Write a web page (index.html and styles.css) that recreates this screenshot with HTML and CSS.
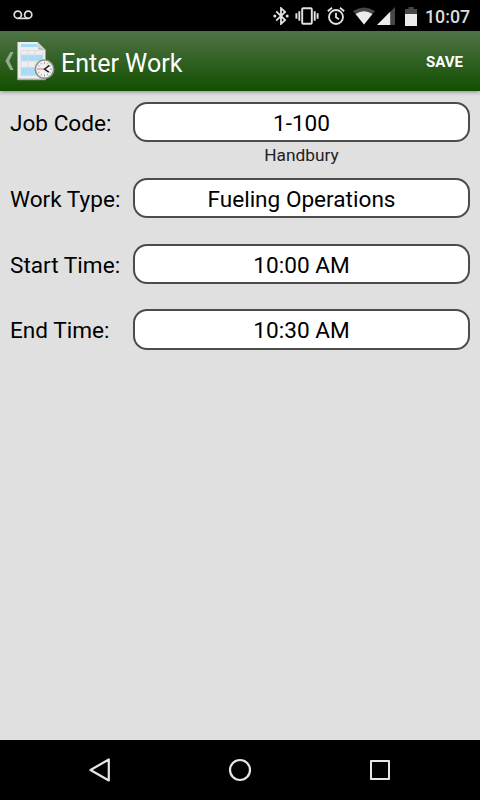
FILE: index.html
```html
<!DOCTYPE html>
<html lang="en">
<head>
    <meta charset="UTF-8">
    <meta name="viewport" content="width=device-width, initial-scale=1.0">
    <title>Enter Work</title>
    <link rel="stylesheet" href="styles.css">
</head>
<body>
    <div class="status-bar">
        <svg class="voicemail" width="20" height="10" viewBox="0 0 20 10" fill="none" stroke="#e0e0e0" stroke-width="1.7">
            <circle cx="4.8" cy="4.7" r="3.6"/>
            <circle cx="15.2" cy="4.7" r="3.6"/>
            <path d="M4.8 8.4h10.4"/>
        </svg>
        <!-- Bluetooth -->
        <svg width="16" height="18" viewBox="0 0 16 18">
            <path d="M3.2 4.4l8.9 8.6L8 16.8V1.2l4.1 3.8-8.9 8.6" fill="none" stroke="#e4e4e4" stroke-width="1.8"/>
            <circle cx="1.8" cy="9" r="1.5" fill="#e4e4e4"/>
            <circle cx="14.2" cy="9" r="1.5" fill="#e4e4e4"/>
        </svg>
        <!-- Vibrate -->
        <svg class="vibrate" width="24" height="18" viewBox="0 0 24 18" fill="none" stroke="#e4e4e4" stroke-width="1.9">
            <rect x="7.2" y="1.2" width="9.6" height="15.6" rx="1"/>
            <path d="M4.3 4.3v9.4M1.4 6.3v5.4M19.7 4.3v9.4M22.6 6.3v5.4"/>
        </svg>
        <!-- Alarm -->
        <svg class="alarm" width="18" height="18" viewBox="0 0 18 18" fill="none" stroke="#e4e4e4" stroke-width="1.8">
            <circle cx="9" cy="10" r="7"/>
            <path d="M.8 4.2L5 .8M13 .8l4.2 3.4M9 5.8v4.5l3 2"/>
        </svg>
        <!-- Wifi -->
        <svg class="wifi" width="22" height="18" viewBox="0 0 22 18">
            <path d="M0 4Q11-3.2 22 4L11 17.6Z" fill="#474747"/>
            <path d="M2.6 7.1Q11 1.6 19.4 7.1L11 17.6Z" fill="#ececec"/>
        </svg>
        <!-- Signal -->
        <svg class="signal" width="18" height="18" viewBox="0 0 18 18">
            <path d="M0 18L18 0v18Z" fill="#474747"/>
            <path d="M0 18L13.2 4.8V18Z" fill="#ececec"/>
        </svg>
        <!-- Battery -->
        <svg class="battery" width="12" height="19" viewBox="0 0 12 19">
            <path d="M0 2h3.5V0h5v2H12v5H0Z" fill="#474747"/>
            <path d="M0 7h12v12H0Z" fill="#ececec"/>
        </svg>
        <span class="clock">10:07</span>
    </div>

    <div class="action-bar">
        <svg class="up" width="9" height="20" viewBox="0 0 9 20">
            <path d="M5.4 1h3.2L4.2 10l4.4 9H5.4L.4 10Z" fill="#96ab8e"/>
        </svg>
        <svg class="logo" width="38" height="40" viewBox="0 0 38 40">
            <path d="M.5 1h20l8 8v30H.5Z" fill="#eeeeee"/>
            <path d="M.5 37.6h28v1.6H.5Z" fill="#a9a9a9"/>
            <path d="M4 3h15l3 3H4ZM4 14h22v6H4ZM4 26.5h15v8H4Z" fill="#a6dcf5"/>
            <path d="M4 9.5h22v25H4Z" fill="none" stroke="#d4dbdf" stroke-width=".8"/>
            <path d="M4 14h22M4 20h22M4 26.5h22M11 9.5v25M18 9.5v25" stroke="#d4dbdf" stroke-width=".8"/>
            <path d="M20.5 1l1 7.5 7 .5Z" fill="#b2b6b0"/>
            <path d="M20.5 1v5l8 3Z" fill="#d4d4d2"/>
            <circle cx="27.5" cy="28.2" r="9.2" fill="#f2f2f2" stroke="#8b8f88" stroke-width="1.6"/>
            <path d="M27.5 21v2M27.5 33.5v2M33 28.2h2M31.1 22l-.8 1.3M23.9 22l.8 1.3M33.7 24.6l-1.3.8M33.7 31.8l-1.3-.8M31.1 34.4l-.8-1.3M23.9 34.4l.8-1.3M21.3 31.8l1.3-.8M21.3 24.6l1.3.8" stroke="#858585" stroke-width=".8"/>
            <path d="M20 28h8" stroke="#e36b62"/>
            <path d="M32.3 24.3L27.5 28.2l4.3 3" fill="none" stroke="#222" stroke-width="1.5"/>
        </svg>
        <h1>Enter Work</h1>
        <button class="save">SAVE</button>
    </div>

    <div class="form">
        <div class="row">
            <span class="label">Job Code:</span>
            <div class="field">1-100</div>
        </div>
        <div class="hint">Handbury</div>
        <div class="row">
            <span class="label">Work Type:</span>
            <div class="field">Fueling Operations</div>
        </div>
        <div class="row">
            <span class="label">Start Time:</span>
            <div class="field">10:00 AM</div>
        </div>
        <div class="row">
            <span class="label">End Time:</span>
            <div class="field">10:30 AM</div>
        </div>
    </div>

    <div class="nav-bar">
        <svg width="24" height="24" viewBox="0 0 24 24" fill="none" stroke="#e6e6e6" stroke-width="2.2" stroke-linejoin="round">
            <path d="M20.8 1.5v21L2.5 12Z"/>
        </svg>
        <svg width="24" height="24" viewBox="0 0 24 24" fill="none" stroke="#e6e6e6" stroke-width="2.2">
            <circle cx="12" cy="12" r="10"/>
        </svg>
        <svg width="24" height="24" viewBox="0 0 24 24" fill="none" stroke="#e6e6e6" stroke-width="2" stroke-linejoin="round">
            <rect x="3" y="3" width="18" height="18"/>
        </svg>
    </div>
</body>
</html>
```

FILE: styles.css
```css
* {
    box-sizing: border-box;
}

body {
    margin: 0;
    height: 100vh;
    display: flex;
    flex-direction: column;
    font-family: Roboto, sans-serif;
    background-color: #e0e0e0;
    color: #000;
}

svg {
    flex-shrink: 0;
}

.status-bar {
    display: flex;
    align-items: center;
    height: 31px;
    padding: 1px 10px 0 13px;
    background-color: #000;
}

.voicemail {
    margin: 0 auto 2px 0;
}

.vibrate {
    margin-left: 6px;
}

.alarm {
    margin-left: 8px;
}

.wifi {
    margin-left: 8px;
}

.signal {
    margin-left: 2px;
}

.battery {
    margin-left: 10px;
}

.clock {
    width: 45px;
    margin-left: 8px;
    padding-top: 1px;
    font-size: 17.8px;
    font-weight: 500;
    line-height: 30px;
    white-space: nowrap;
    color: #dcdcdc;
}

.action-bar {
    display: flex;
    align-items: center;
    height: 60px;
    padding: 0 16px 0 5px;
    background: linear-gradient(#507346, #124f00);
    box-shadow: 0 1px 4px rgba(0, 0, 0, 0.4);
}

.logo {
    margin-left: 3px;
}

h1 {
    margin: 4px auto 0 6px;
    font-size: 25px;
    font-weight: 400;
    color: #fff;
}

.save {
    padding: 2px 1px 0 0;
    border: none;
    background: none;
    font-family: inherit;
    font-size: 15px;
    font-weight: 700;
    color: #fff;
}

.form {
    flex: 1;
    padding: 10.5px 10px 0;
}

.row {
    display: flex;
    align-items: center;
    margin-bottom: 25.3px;
}

.label {
    width: 123px;
    padding-top: 3px;
    font-size: 22.6px;
}

.field {
    flex: 1;
    height: 40.3px;
    border: 2px solid #4c4c4c;
    border-radius: 14px;
    background-color: #fff;
    font-size: 22.6px;
    line-height: 39.4px;
    text-align: center;
}

.hint {
    height: 20px;
    margin: -22px 0 13px 123px;
    font-size: 17.3px;
    line-height: 20px;
    text-align: center;
    color: #222;
}

.nav-bar {
    display: flex;
    justify-content: center;
    align-items: center;
    gap: 116px;
    height: 60px;
    background-color: #000;
}
```
